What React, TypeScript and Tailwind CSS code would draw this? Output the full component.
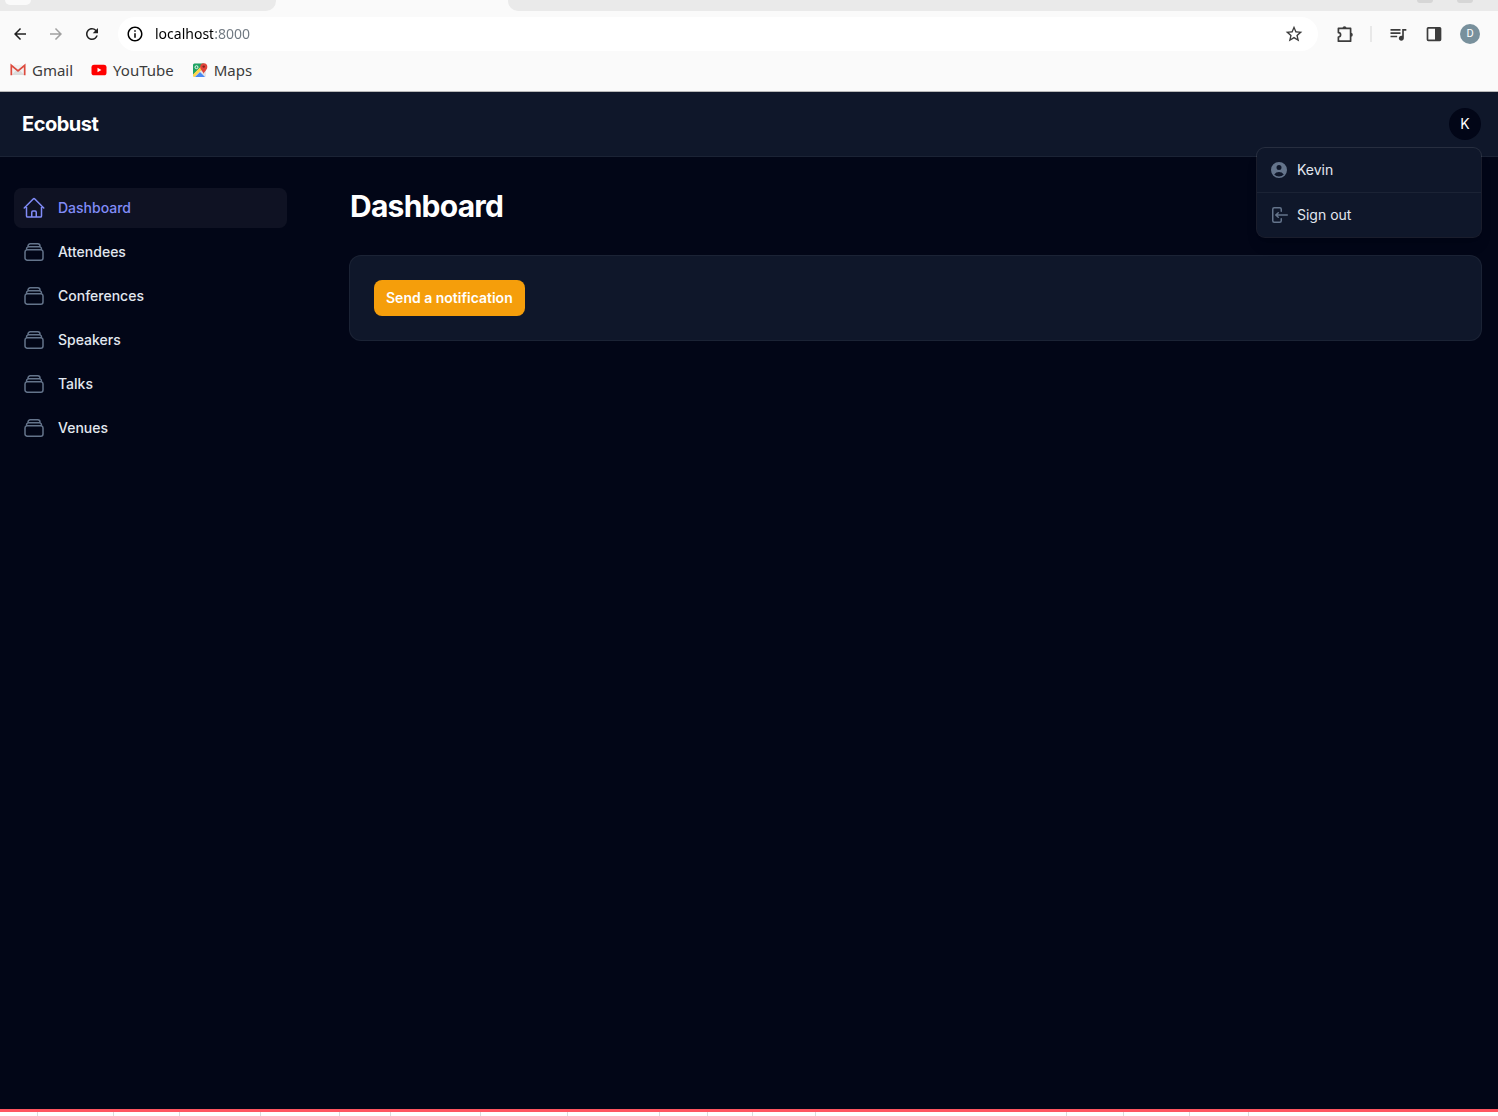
import React, { useState } from "react";
import {
  HiOutlineHome,
  HiOutlineRectangleStack,
  HiMiniUserCircle,
  HiMiniArrowLeftOnRectangle,
} from "react-icons/hi2";
import {
  MdArrowBack,
  MdArrowForward,
  MdRefresh,
  MdInfoOutline,
  MdStarBorder,
  MdQueueMusic,
} from "react-icons/md";

function GmailIcon() {
  return (
    <svg viewBox="0 0 16 16" className="size-4" aria-hidden="true">
      <path d="M1 3h14v10H1z" fill="#f1f1f1" />
      <path d="M1.5 13l5-5L8 9l1.500-1 5 5z" fill="#dcdcdc" />
      <path d="M1.300 13.200V3.400L8 8.800l6.700-5.400v9.800" fill="none" stroke="#dd4b3e" strokeWidth="1.700" />
    </svg>
  );
}

function YouTubeIcon() {
  return (
    <svg viewBox="0 0 16 16" className="size-4" aria-hidden="true">
      <rect x="0.500" y="2.700" width="15" height="10.600" rx="2.600" fill="#f00" />
      <path d="M6.500 5.800v4.400L10.400 8z" fill="#fff" />
    </svg>
  );
}

function MapsIcon() {
  return (
    <svg viewBox="0 0 16 16" className="size-4" aria-hidden="true">
      <rect x="1" y="1.500" width="13" height="13.500" rx="1.500" fill="#e3e5e8" />
      <path d="M2.500 1.500H12L1 13V3A1.500 1.500 0 0 1 2.500 1.500z" fill="#1ea362" />
      <path d="M1 12.500L11.500 2H14v1.500L2.500 15A1.500 1.500 0 0 1 1 13.500z" fill="#ffd54b" />
      <path d="M3 15l5-5 5 5z" fill="#4a89f3" />
      <circle cx="4.500" cy="5.200" r="1.500" fill="none" stroke="#fff" strokeWidth="0.900" />
      <path d="M11.700 12c-.4-2.500-3.500-3.800-3.500-7.200a3.500 3.500 0 0 1 7.100 0c0 3.400-3.200 4.700-3.600 7.200z" fill="#e0443a" />
      <circle cx="11.750" cy="4.600" r="1.200" fill="#7d231c" />
    </svg>
  );
}

function ExtensionIcon() {
  return (
    <svg viewBox="0 0 18 18" className="size-[18px]" aria-hidden="true">
      <path
        d="M2.400 3.400h12.200v12.800H2.400v-4.200a2.200 2.200 0 0 0 0-4.400z"
        fill="none"
        stroke="#3c3c3c"
        strokeWidth="1.700"
        strokeLinejoin="round"
      />
      <path d="M6.500 3.200a2 2 0 0 1 4 0zM14.800 7.800a2 2 0 0 1 0 4z" fill="#3c3c3c" />
    </svg>
  );
}

function SidePanelIcon() {
  return (
    <svg viewBox="0 0 16 16" className="size-4" aria-hidden="true">
      <rect x="1.500" y="1.800" width="13" height="12.500" rx="0.800" fill="none" stroke="#3c3c3c" strokeWidth="1.700" />
      <path d="M9 1.800h5.500v12.500H9z" fill="#3c3c3c" />
    </svg>
  );
}

const bookmarks = [
  { label: "Gmail", icon: GmailIcon },
  { label: "YouTube", icon: YouTubeIcon },
  { label: "Maps", icon: MapsIcon },
];

function BrowserChrome() {
  const [address, setAddress] = useState("localhost:8000");
  return (
    <div className="border-b border-[#b8b8b8] bg-[#fafafa] font-['Noto_Sans','Open_Sans',sans-serif] text-[#3c3c3c]">
      <div className="flex h-[11px] items-start justify-between overflow-hidden">
        <div className="h-full w-[276px] rounded-br-[10px] bg-[#eaeaea] pl-[5px]">
          <div className="h-[5px] w-[26px] rounded-b-full bg-[#fafafa]" />
        </div>
        <div className="ml-[232px] flex h-full flex-1 justify-end gap-6 rounded-bl-[10px] bg-[#eaeaea] pr-[25px]">
          <div className="h-[3px] w-4 rounded-b-full bg-[#d6d6d6]" />
          <div className="h-[3px] w-4 rounded-b-full bg-[#d6d6d6]" />
        </div>
      </div>
      <div className="flex h-[46px] items-center pr-[18px] pl-[11px]">
        <div className="flex items-center gap-[18px]">
          <button aria-label="Back" className="text-[#202020]"><MdArrowBack className="size-[18px]" /></button>
          <button aria-label="Forward" className="text-[#a0a0a0]"><MdArrowForward className="size-[18px]" /></button>
          <button aria-label="Reload" className="text-[#202020]"><MdRefresh className="size-[18px]" /></button>
        </div>
        <div className="ml-[17px] flex h-[34px] flex-1 items-center rounded-full bg-white px-2">
          <button aria-label="View site information" className="text-black">
            <MdInfoOutline className="size-[18px]" />
          </button>
          <input
            aria-label="Address"
            value={address}
            onChange={(e) => setAddress(e.target.value)}
            className="ml-[11px] min-w-0 flex-1 bg-linear-to-r from-black from-[58px] to-[#6e7780] to-[58px] bg-clip-text text-sm text-transparent outline-none"
          />
          <button aria-label="Bookmark this page" className="mr-1.5"><MdStarBorder className="size-5" /></button>
        </div>
        <div className="ml-[18px] flex items-center">
          <button aria-label="Extensions"><ExtensionIcon /></button>
          <div className="mx-4 h-4 w-0.5 bg-[#e8e8e8]" />
          <button aria-label="Media controls"><MdQueueMusic className="size-5" /></button>
          <button aria-label="Side panel" className="ml-[18px]"><SidePanelIcon /></button>
          <button aria-label="Profile" className="ml-[18px] size-5 rounded-full bg-[#78909c] font-[Roboto,sans-serif] text-[11px] text-white">
            D
          </button>
        </div>
      </div>
      <nav aria-label="Bookmarks" className="flex h-[34px] items-start gap-[18px] px-[10px] pt-px">
        {bookmarks.map(({ label, icon: Icon }) => (
          <a key={label} href="#" className="flex items-center gap-1.5 text-[15px] leading-6">
            <Icon />
            {label}
          </a>
        ))}
      </nav>
    </div>
  );
}

function UserMenu() {
  return (
    <div className="relative">
      <button className="block size-8 rounded-full bg-[#020617] text-sm text-white">K</button>
      <div className="absolute top-full right-0 z-10 mt-2 w-56 divide-y divide-white/5 rounded-lg bg-[#0f172a] text-sm text-[#e2e8f0] shadow-lg ring-1 ring-white/10">
        <div className="p-1">
          <a href="#" className="flex items-center gap-2 rounded-md p-2">
            <HiMiniUserCircle className="size-5 text-[#64748b]" />
            Kevin
          </a>
        </div>
        <div className="p-1">
          <button className="flex w-full items-center gap-2 rounded-md p-2">
            <HiMiniArrowLeftOnRectangle className="size-5 text-[#64748b]" />
            Sign out
          </button>
        </div>
      </div>
    </div>
  );
}

const navItems = ["Attendees", "Conferences", "Speakers", "Talks", "Venues"];

function Sidebar() {
  return (
    <nav aria-label="Main" className="flex w-[273px] shrink-0 flex-col gap-1 text-sm font-medium text-[#e2e8f0]">
      <a href="#" aria-current="page" className="flex items-center gap-3 rounded-lg bg-white/5 p-2 text-[#818cf8]">
        <HiOutlineHome className="size-6" />
        Dashboard
      </a>
      {navItems.map((item) => (
        <a key={item} href="#" className="flex items-center gap-3 rounded-lg p-2">
          <HiOutlineRectangleStack className="size-6 text-[#64748b]" />
          {item}
        </a>
      ))}
    </nav>
  );
}

const footerWidths = [38, 76, 66, 81, 79, 51, 90, 87, 92, 48, 45, 63, 251, 57, 66, 59];

function FooterStrip() {
  return (
    <div className="flex h-[7px] overflow-hidden border-t-3 border-[#ff5560] bg-white">
      {footerWidths.map((width, i) => (
        <div key={i} className="h-full shrink-0 border-r border-[#dcdcdc]" style={{ width }} />
      ))}
    </div>
  );
}

export default function App() {
  return (
    <div className="flex min-h-screen flex-col bg-[#020617] font-[Inter,sans-serif]">
      <BrowserChrome />
      <header className="flex h-[65px] items-center justify-between border-b border-white/5 bg-[#0f172a] pr-[17px] pl-[22px]">
        <a href="#" className="text-xl leading-5 font-bold tracking-tight text-white">Ecobust</a>
        <UserMenu />
      </header>
      <div className="flex flex-1 pt-[31px] pr-4 pl-[14px]">
        <Sidebar />
        <main className="ml-[62px] flex flex-1 flex-col gap-[31px]">
          <h1 className="pl-px text-3xl font-bold tracking-tight text-white">Dashboard</h1>
          <section className="rounded-xl border border-white/5 bg-[#0f172a] p-6">
            <button className="block rounded-lg bg-[#f59e0b] px-3 py-2 text-sm font-semibold text-white">
              Send a notification
            </button>
          </section>
        </main>
      </div>
      <FooterStrip />
    </div>
  );
}
